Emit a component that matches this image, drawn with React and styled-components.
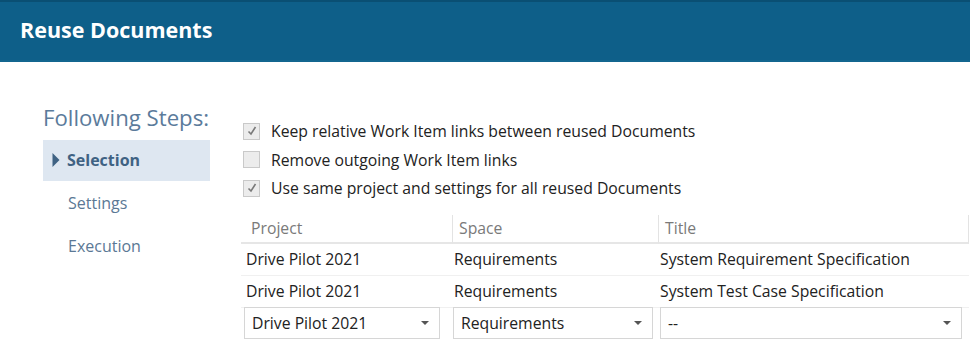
import styled, { createGlobalStyle } from 'styled-components'

const GlobalStyle = createGlobalStyle`
  body {
    margin: 0;
    background: #fff;
    font-family: 'Open Sans', 'Noto Sans', sans-serif;
  }
`

const Page = styled.div`
  width: 970px;
  height: 348px;
  overflow: hidden;
  background: #fff;
`

const Header = styled.header`
  height: 62px;
  background: #0e5f89;
  border-top: 2px solid #0a4f73;
  border-bottom: 2px solid #13668f;
  box-sizing: border-box;
  display: flex;
  align-items: center;
  padding: 0 20px 3px;
  color: #fff;
  font-size: 21.5px;
  font-weight: 700;
`

const Body = styled.div`
  display: flex;
  padding-top: 42px;
`

const Sidebar = styled.nav`
  width: 167px;
  margin-left: 43px;
  display: flex;
  flex-direction: column;
`

const SideTitle = styled.div`
  font-size: 22.2px;
  color: #5b7b9b;
  line-height: 28px;
  margin-bottom: 8px;
  white-space: nowrap;
`

const Step = styled.div`
  height: 41px;
  display: flex;
  align-items: center;
  gap: 7px;
  padding-left: ${p => (p.$active ? '9px' : '25px')};
  background: ${p => (p.$active ? '#dee7f1' : 'transparent')};
  color: ${p => (p.$active ? '#3f6283' : '#5b7895')};
  font-size: 16px;
  font-weight: ${p => (p.$active ? 700 : 400)};
  margin-bottom: 2px;
  padding-bottom: 1px;
  box-sizing: border-box;
`

const Main = styled.div`
  flex: 1;
  margin-left: 31px;
  padding-top: 13px;
`

const CheckRow = styled.label`
  display: flex;
  align-items: center;
  gap: 11px;
  height: 28.5px;
  margin-left: 2px;
  font-size: 15.75px;
  color: #222;
`

const Box = styled.span`
  width: 17px;
  height: 17px;
  box-sizing: border-box;
  border: 1px solid #c9c9c9;
  background: #ececec;
  display: flex;
  align-items: center;
  justify-content: center;
`

const Table = styled.div`
  margin-top: 12px;
  display: grid;
  grid-template-columns: 211px 206px 311px;
  width: 729px;
`

const HeadCell = styled.div`
  height: 27px;
  display: flex;
  align-items: center;
  padding-left: ${p => (p.$first ? '10px' : '6px')};
  color: #7a7a7a;
  font-size: 15.75px;
  border-bottom: 2px solid #e6e6e6;
  border-left: ${p => (p.$first ? 'none' : '1px solid #e3e3e3')};
  border-right: ${p => (p.$last ? '1px solid #e3e3e3' : 'none')};
`

const Cell = styled.div`
  height: 31px;
  display: flex;
  align-items: center;
  padding-left: ${p => (p.$first ? '5px' : '2px')};
  font-size: 15.75px;
  color: #222;
  border-bottom: 1px solid #f0f0f0;
  white-space: nowrap;
`

const SelectCell = styled.div`
  height: 32px;
  margin-top: -1px;
  padding: 0 ${p => p.$pr}px 0 ${p => p.$pl}px;
  box-sizing: border-box;
  display: flex;
`

const Select = styled.div`
  flex: 1;
  border: 1px solid #d6d6d6;
  display: flex;
  align-items: center;
  justify-content: space-between;
  padding: 0 10px 0 7px;
  font-size: 15.75px;
  color: #222;
  box-sizing: border-box;
  height: 32px;
`

const Caret = styled.span`
  width: 0;
  height: 0;
  border-left: 4px solid transparent;
  border-right: 4px solid transparent;
  border-top: 4px solid #555;
`

function Check({ checked }) {
  return (
    <Box>
      {checked && (
        <svg width='12' height='12' viewBox='0 0 12 12'>
          <path d='M2.5 6.5 L5 9 L9.5 2' fill='none' stroke='#7a7a7a' strokeWidth='1.6' />
        </svg>
      )}
    </Box>
  )
}

function Triangle() {
  return (
    <svg width='8' height='14' viewBox='0 0 8 14'>
      <path d='M0.5 0 L7.5 7 L0.5 14 Z' fill='#3f6283' />
    </svg>
  )
}

const rows = [
  ['Drive Pilot 2021', 'Requirements', 'System Requirement Specification'],
  ['Drive Pilot 2021', 'Requirements', 'System Test Case Specification'],
]

export default function App() {
  return (
    <Page>
      <GlobalStyle />
      <Header>Reuse Documents</Header>
      <Body>
        <Sidebar>
          <SideTitle>Following Steps:</SideTitle>
          <Step $active>
            <Triangle />
            Selection
          </Step>
          <Step>Settings</Step>
          <Step>Execution</Step>
        </Sidebar>
        <Main>
          <CheckRow>
            <Check checked />
            Keep relative Work Item links between reused Documents
          </CheckRow>
          <CheckRow>
            <Check />
            Remove outgoing Work Item links
          </CheckRow>
          <CheckRow>
            <Check checked />
            Use same project and settings for all reused Documents
          </CheckRow>
          <Table>
            <HeadCell $first>Project</HeadCell>
            <HeadCell>Space</HeadCell>
            <HeadCell $last>Title</HeadCell>
            {rows.map((r, i) =>
              r.map((c, j) => (
                <Cell key={`${i}-${j}`} $first={j === 0}>
                  {c}
                </Cell>
              ))
            )}
            <SelectCell $pl={3} $pr={12}>
              <Select>
                Drive Pilot 2021
                <Caret />
              </Select>
            </SelectCell>
            <SelectCell $pl={1} $pr={5}>
              <Select>
                Requirements
                <Caret />
              </Select>
            </SelectCell>
            <SelectCell $pl={2} $pr={7}>
              <Select>
                --
                <Caret />
              </Select>
            </SelectCell>
          </Table>
        </Main>
      </Body>
    </Page>
  )
}
